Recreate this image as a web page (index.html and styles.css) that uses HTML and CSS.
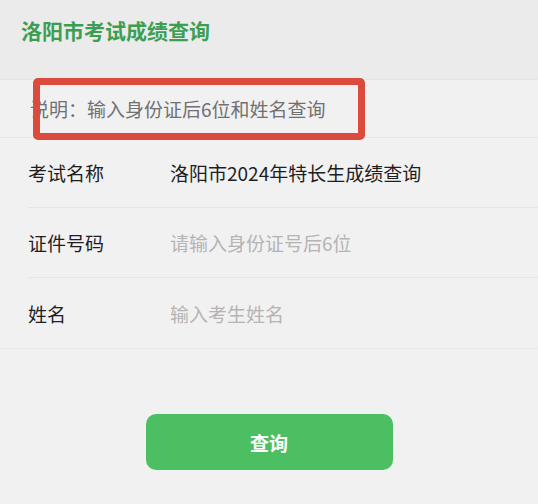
FILE: index.html
```html
<!DOCTYPE html>
<html lang="zh-CN">
<head>
<meta charset="utf-8">
<title>洛阳市考试成绩查询</title>
<link rel="stylesheet" href="styles.css">
</head>
<body>
<div class="page">
  <header class="topbar">
    <h1 class="title">洛阳市考试成绩查询</h1>
  </header>
  <section class="note">
    <p class="note-text">说明：输入身份证后6位和姓名查询</p>
    <span class="mark"></span>
  </section>
  <form class="fields">
    <div class="row">
      <span class="label">考试名称</span>
      <span class="value">洛阳市2024年特长生成绩查询</span>
    </div>
    <div class="row">
      <span class="label">证件号码</span>
      <span class="value placeholder">请输入身份证号后6位</span>
    </div>
    <div class="row last">
      <span class="label">姓名</span>
      <span class="value placeholder">输入考生姓名</span>
    </div>
  </form>
  <div class="actions">
    <button class="submit" type="button">查询</button>
  </div>
</div>
</body>
</html>
```

FILE: styles.css
```css
* { box-sizing: border-box; }
html, body {
  margin: 0;
  padding: 0;
  background: #f2f1f2;
  font-family: "Noto Sans CJK SC", "Noto Sans", sans-serif;
}
.page {
  width: 538px;
  height: 504px;
  overflow: hidden;
}
.topbar {
  height: 80px;
  background: #ebebeb;
  border-bottom: 1px solid #e4e4e4;
  padding: 17px 0 0 21px;
}
.title {
  margin: 0;
  font-size: 21px;
  line-height: 26px;
  font-weight: 700;
  color: #3d9e52;
}
.note {
  position: relative;
  height: 58px;
  display: flex;
  align-items: center;
  padding-left: 30px;
  border-bottom: 1px solid #e6e5e6;
}
.note-text {
  margin: 0;
  font-size: 19px;
  color: #707070;
}
.mark {
  position: absolute;
  left: 33px;
  top: -2px;
  width: 332px;
  height: 62px;
  border: 7px solid #db4a3d;
  border-radius: 5px;
}
.fields {
  margin: 0;
  border-bottom: 1px solid #e6e5e6;
}
.row {
  height: 70px;
  display: flex;
  align-items: center;
  margin-left: 28px;
  border-bottom: 1px solid #e6e5e6;
  font-size: 19px;
}
.row.last { border-bottom: none; }
.label {
  width: 142px;
  color: #1e1e1e;
}
.value {
  color: #1e1e1e;
}
.value.placeholder {
  color: #b4b4b4;
}
.actions {
  display: flex;
  justify-content: center;
  padding-top: 65px;
}
.submit {
  width: 247px;
  height: 56px;
  border: none;
  border-radius: 10px;
  background: #4dbf63;
  color: #ffffff;
  font-family: "Noto Sans CJK SC", "Noto Sans", sans-serif;
  font-size: 19px;
  font-weight: 700;
  padding: 0;
}
```
